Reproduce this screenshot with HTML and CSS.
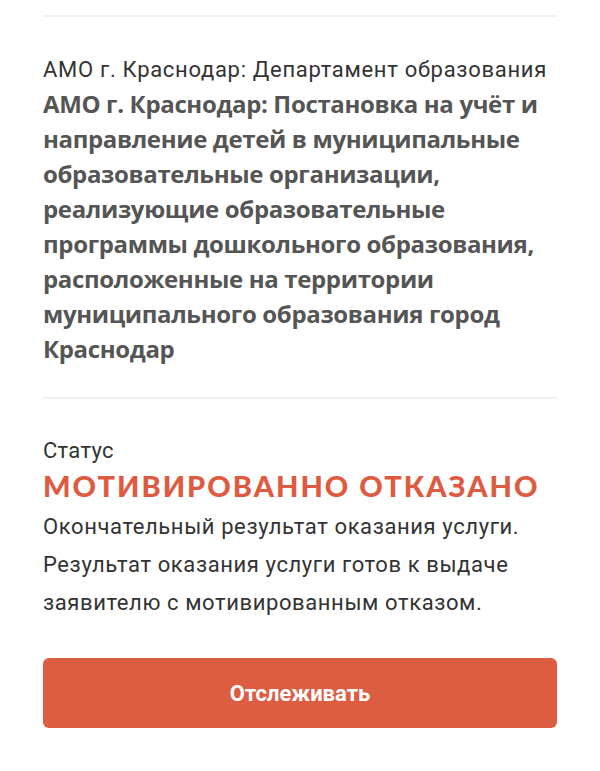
FILE: index.html
```html
<!DOCTYPE html>
<html lang="ru">
<head>
<meta charset="utf-8">
<link rel="stylesheet" href="styles.css">
</head>
<body>
<div class="page">
  <div class="divider"></div>
  <div class="source">АМО г. Краснодар: Департамент образования</div>
  <div class="title">АМО г. Краснодар: Постановка на учёт и направление детей в муниципальные образовательные организации, реализующие образовательные программы дошкольного образования, расположенные на территории муниципального образования город Краснодар</div>
  <div class="divider divider-second"></div>
  <div class="status-label">Статус</div>
  <div class="status-value">МОТИВИРОВАННО ОТКАЗАНО</div>
  <div class="status-desc">Окончательный результат оказания услуги. Результат оказания услуги готов к выдаче заявителю с мотивированным отказом.</div>
  <button class="track-btn">Отслеживать</button>
</div>
</body>
</html>
```
FILE: styles.css
```css
html, body {
  margin: 0;
  padding: 0;
  background: #ffffff;
}
.page {
  padding: 15px 43px 0;
  font-family: Roboto, "Liberation Sans", sans-serif;
  color: #333333;
}
.divider {
  height: 2px;
  background: #f1f1f1;
}
.source {
  margin-top: 35px;
  font-size: 22px;
  line-height: 35px;
  letter-spacing: 0.7px;
  color: #333333;
}
.title {
  margin-top: -1px;
  font-family: "Open Sans", Roboto, sans-serif;
  font-size: 24px;
  line-height: 35px;
  font-weight: 700;
  letter-spacing: -0.35px;
  color: #555555;
}
.divider-second {
  margin-top: 31px;
}
.status-label {
  margin-top: 34px;
  font-size: 22px;
  line-height: 35px;
  letter-spacing: 0.3px;
}
.status-value {
  font-family: Lato, "Open Sans", sans-serif;
  font-weight: 900;
  font-size: 29px;
  line-height: 36px;
  letter-spacing: 2px;
  color: #de5b41;
}
.status-desc {
  margin-top: 4px;
  font-size: 22px;
  line-height: 38px;
  letter-spacing: 0.6px;
  color: #333333;
}
.track-btn {
  display: block;
  width: 100%;
  height: 70px;
  margin-top: 36px;
  border: none;
  border-radius: 6px;
  background: #dd5d43;
  color: #ffffff;
  font-family: Roboto, "Liberation Sans", sans-serif;
  font-weight: 700;
  font-size: 22px;
}
```
